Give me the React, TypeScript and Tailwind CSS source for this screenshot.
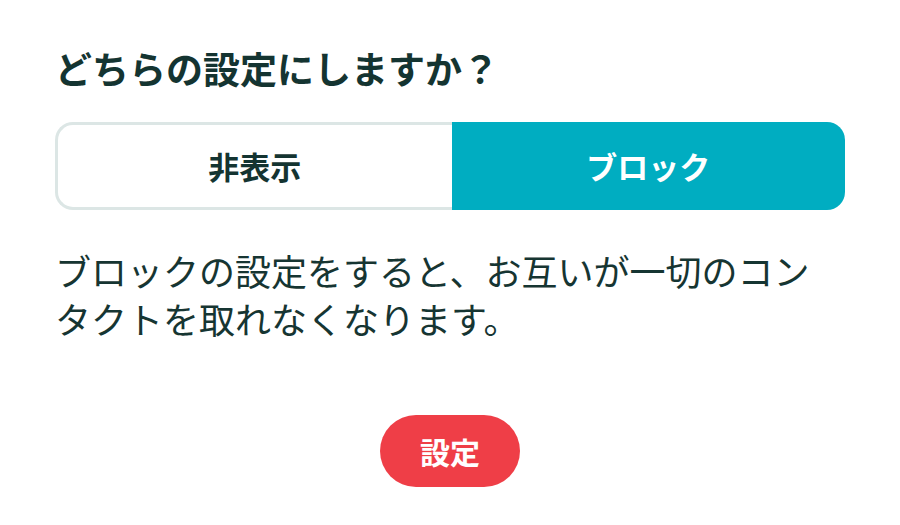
import { useState } from "react";

const font = { fontFamily: '"Noto Sans CJK JP", "Noto Sans", sans-serif' };

export default function App() {
  const [mode, setMode] = useState<"hide" | "block">("block");

  return (
    <div className="w-[900px] h-[525px] bg-white px-[55px] pt-[42px]" style={font}>
      <h2 className="text-[37px] leading-[52px] font-bold text-[#143431]">どちらの設定にしますか？</h2>

      {/* Segmented control */}
      <div className="mt-[28px] flex h-[88px] w-[790px]">
        <button
          onClick={() => setMode("hide")}
          className={`flex-1 rounded-l-[18px] text-[31px] font-bold ${
            mode === "hide"
              ? "bg-[#00adc1] text-white"
              : "border-[3px] border-r-0 border-[#dce6e5] bg-white text-[#143431]"
          }`}
        >
          非表示
        </button>
        <button
          onClick={() => setMode("block")}
          className={`flex-1 rounded-r-[18px] text-[31px] font-bold ${
            mode === "block"
              ? "bg-[#00adc1] text-white"
              : "border-[3px] border-l-0 border-[#dce6e5] bg-white text-[#143431]"
          }`}
        >
          ブロック
        </button>
      </div>

      <p className="mt-[36px] w-[790px] text-[36px] leading-[48px] text-[#163532]">
        ブロックの設定をすると、お互いが一切のコンタクトを取れなくなります。
      </p>

      <div className="mt-[73px] flex justify-center">
        <button className="h-[72px] w-[140px] rounded-full bg-[#ef3e47] text-[30px] font-bold text-white">
          設定
        </button>
      </div>
    </div>
  );
}
